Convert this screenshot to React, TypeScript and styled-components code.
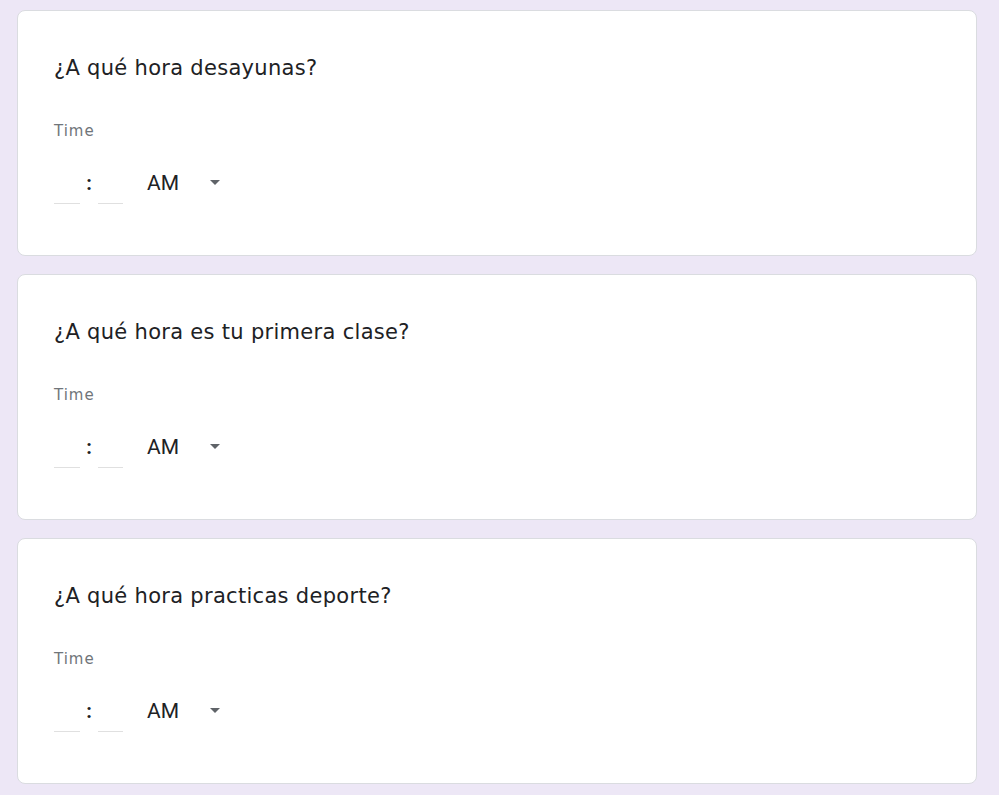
import React from 'react';
import styled, {createGlobalStyle} from 'styled-components';

const GlobalStyle = createGlobalStyle`
  html, body {
    margin: 0;
    padding: 0;
    background: #ede7f6;
  }
  body {
    font-family: Roboto, 'Liberation Sans', sans-serif;
  }
`;

const Page = styled.div`
  display: flex;
  flex-direction: column;
  gap: 18px;
  padding: 10px 22px 12px 17px;
`;

const Card = styled.div`
  box-sizing: border-box;
  height: 246px;
  background: #fff;
  border: 1px solid #dadce0;
  border-radius: 8px;
  padding: 43px 36px 0 36px;
`;

const Title = styled.div`
  font-family: 'DejaVu Sans', 'Open Sans', sans-serif;
  font-size: 21px;
  line-height: 28px;
  letter-spacing: 0.3px;
  color: #202124;
`;

const Label = styled.div`
  margin-top: 38px;
  font-family: 'DejaVu Sans', Roboto, sans-serif;
  font-size: 15px;
  line-height: 22px;
  letter-spacing: 1px;
  color: #70757a;
`;

const TimeRow = styled.div`
  display: flex;
  align-items: flex-start;
  margin-top: 30px;
`;

const Field = styled.div<{$w: number}>`
  width: ${p => p.$w}px;
  height: 32px;
  box-sizing: border-box;
  border-bottom: 1px solid #e0e0e0;
`;

const Colon = styled.div`
  width: 18px;
  text-align: center;
  font-size: 20px;
  font-weight: 700;
  line-height: 22px;
  color: #202124;
`;

const Select = styled.div`
  display: flex;
  align-items: flex-start;
  justify-content: space-between;
  width: 80px;
  margin-left: 24px;
`;

const SelectText = styled.span`
  font-size: 21px;
  line-height: 22px;
  color: #202124;
`;

const Arrow = styled.svg`
  margin-top: -2px;
  fill: #5f6368;
`;

const questions = [
  '¿A qué hora desayunas?',
  '¿A qué hora es tu primera clase?',
  '¿A qué hora practicas deporte?',
];

const TimeQuestion = ({title}: {title: string}) => (
  <Card>
    <Title>{title}</Title>
    <Label>Time</Label>
    <TimeRow>
      <Field $w={26} />
      <Colon>:</Colon>
      <Field $w={25} />
      <Select>
        <SelectText>AM</SelectText>
        <Arrow width="24" height="24" viewBox="0 0 24 24">
          <path d="M7 10l5 5 5-5z" />
        </Arrow>
      </Select>
    </TimeRow>
  </Card>
);

export default function App() {
  return (
    <>
      <GlobalStyle />
      <Page>
        {questions.map(q => (
          <TimeQuestion key={q} title={q} />
        ))}
      </Page>
    </>
  );
}
